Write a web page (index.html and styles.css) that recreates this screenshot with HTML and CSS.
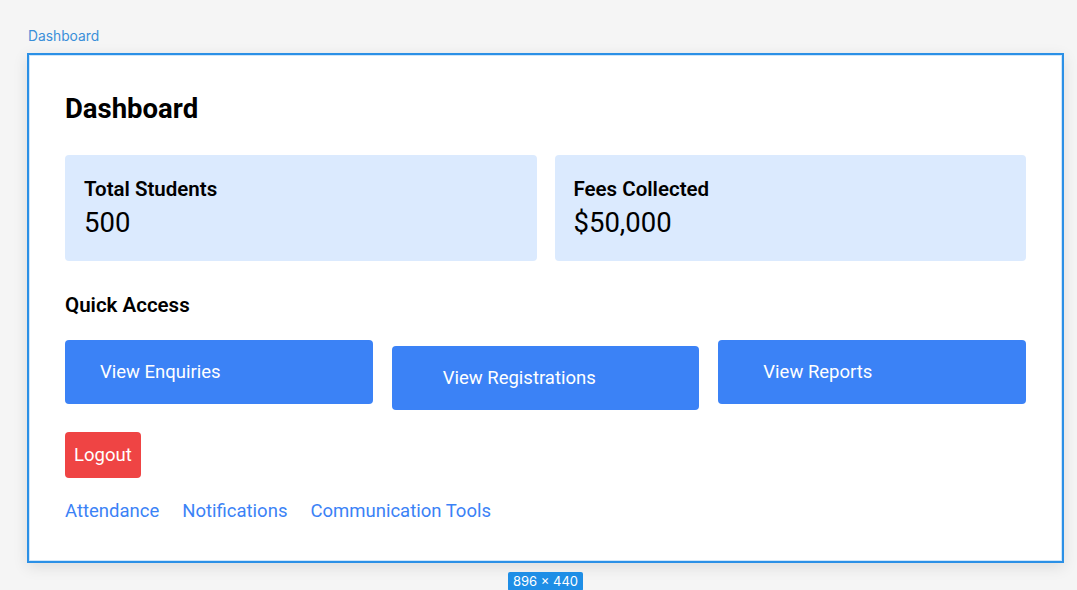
FILE: index.html
```html
<!DOCTYPE html>
<html>
<head>
<meta charset="utf-8">
<link rel="stylesheet" href="styles.css">
</head>
<body>
<div class="canvas">
  <div class="frame-label">Dashboard</div>
  <div class="frame">
    <h1 class="title">Dashboard</h1>
    <div class="stats">
      <div class="card">
        <div class="card-title">Total Students</div>
        <div class="card-value">500</div>
      </div>
      <div class="card">
        <div class="card-title">Fees Collected</div>
        <div class="card-value">$50,000</div>
      </div>
    </div>
    <h2 class="section">Quick Access</h2>
    <div class="quick">
      <div class="qbtn qbtn-enq">View Enquiries</div>
      <div class="qbtn qbtn-reg">View Registrations</div>
      <div class="qbtn qbtn-rep">View Reports</div>
    </div>
    <div class="logout">Logout</div>
    <div class="links">
      <span class="link">Attendance</span>
      <span class="link">Notifications</span>
      <span class="link">Communication Tools</span>
    </div>
  </div>
  <div class="size-row"><span class="size-badge">896 × 440</span></div>
</div>
</body>
</html>
```
FILE: styles.css
```css
html, body {
  margin: 0;
  padding: 0;
  background: #f5f5f5;
  width: 1077px;
  height: 590px;
  overflow: hidden;
}
.canvas {
  padding: 28px 0 0 27px;
  font-family: Roboto, "Liberation Sans", sans-serif;
}
.frame-label {
  font-family: Inter, "Liberation Sans", sans-serif;
  font-size: 13.8px;
  line-height: 16px;
  color: #3a8fd9;
  padding-left: 1px;
  height: 25px;
}
.frame {
  box-sizing: border-box;
  width: 1037px;
  height: 510px;
  background: #fff;
  border: 2px solid #2b90e6;
  box-shadow: 0 4px 14px rgba(0,0,0,0.10), inset 0 0 0 1px #cfe6fa;
  padding: 36px 36px 0 36px;
  color: #000;
}
.title {
  margin: 0;
  font-size: 27.5px;
  font-weight: 700;
  line-height: 35px;
}
.stats {
  display: flex;
  gap: 18px;
  margin-top: 29px;
}
.card {
  flex: 1;
  height: 106px;
  box-sizing: border-box;
  background: #dbeafe;
  border-radius: 4px;
  padding: 21px 19px;
}
.card-title {
  font-size: 20.5px;
  font-weight: 600;
  line-height: 26px;
}
.card-value {
  font-size: 27.5px;
  line-height: 32px;
  margin-top: 5px;
}
.section {
  margin: 29px 0 0;
  font-size: 20.5px;
  font-weight: 600;
  line-height: 30px;
}
.quick {
  display: grid;
  grid-template-columns: 1fr 1fr 1fr;
  gap: 19px;
  align-items: start;
  margin-top: 20px;
}
.qbtn {
  height: 64px;
  box-sizing: border-box;
  background: #3b82f6;
  color: #fff;
  border-radius: 4px;
  font-size: 18.5px;
  line-height: 64px;
  padding-left: 35px;
}
.qbtn-reg {
  margin-top: 6px;
  padding-left: 51px;
}
.qbtn-rep {
  padding-left: 45px;
}
.logout {
  display: inline-block;
  margin-top: 22px;
  background: #ef4444;
  color: #fff;
  border-radius: 4px;
  font-size: 18.5px;
  line-height: 46px;
  height: 46px;
  padding: 0 9px;
}
.links {
  display: flex;
  gap: 23px;
  margin-top: 20px;
  font-size: 18.5px;
  line-height: 26px;
  color: #3b82f6;
}
.size-row {
  width: 1037px;
  text-align: center;
  margin-top: 8px;
}
.size-badge {
  display: inline-block;
  background: #1e8ee6;
  color: #fff;
  font-family: Inter, "Liberation Sans", sans-serif;
  font-size: 13px;
  line-height: 19px;
  padding: 0 5px;
  border-radius: 2px;
}
```
